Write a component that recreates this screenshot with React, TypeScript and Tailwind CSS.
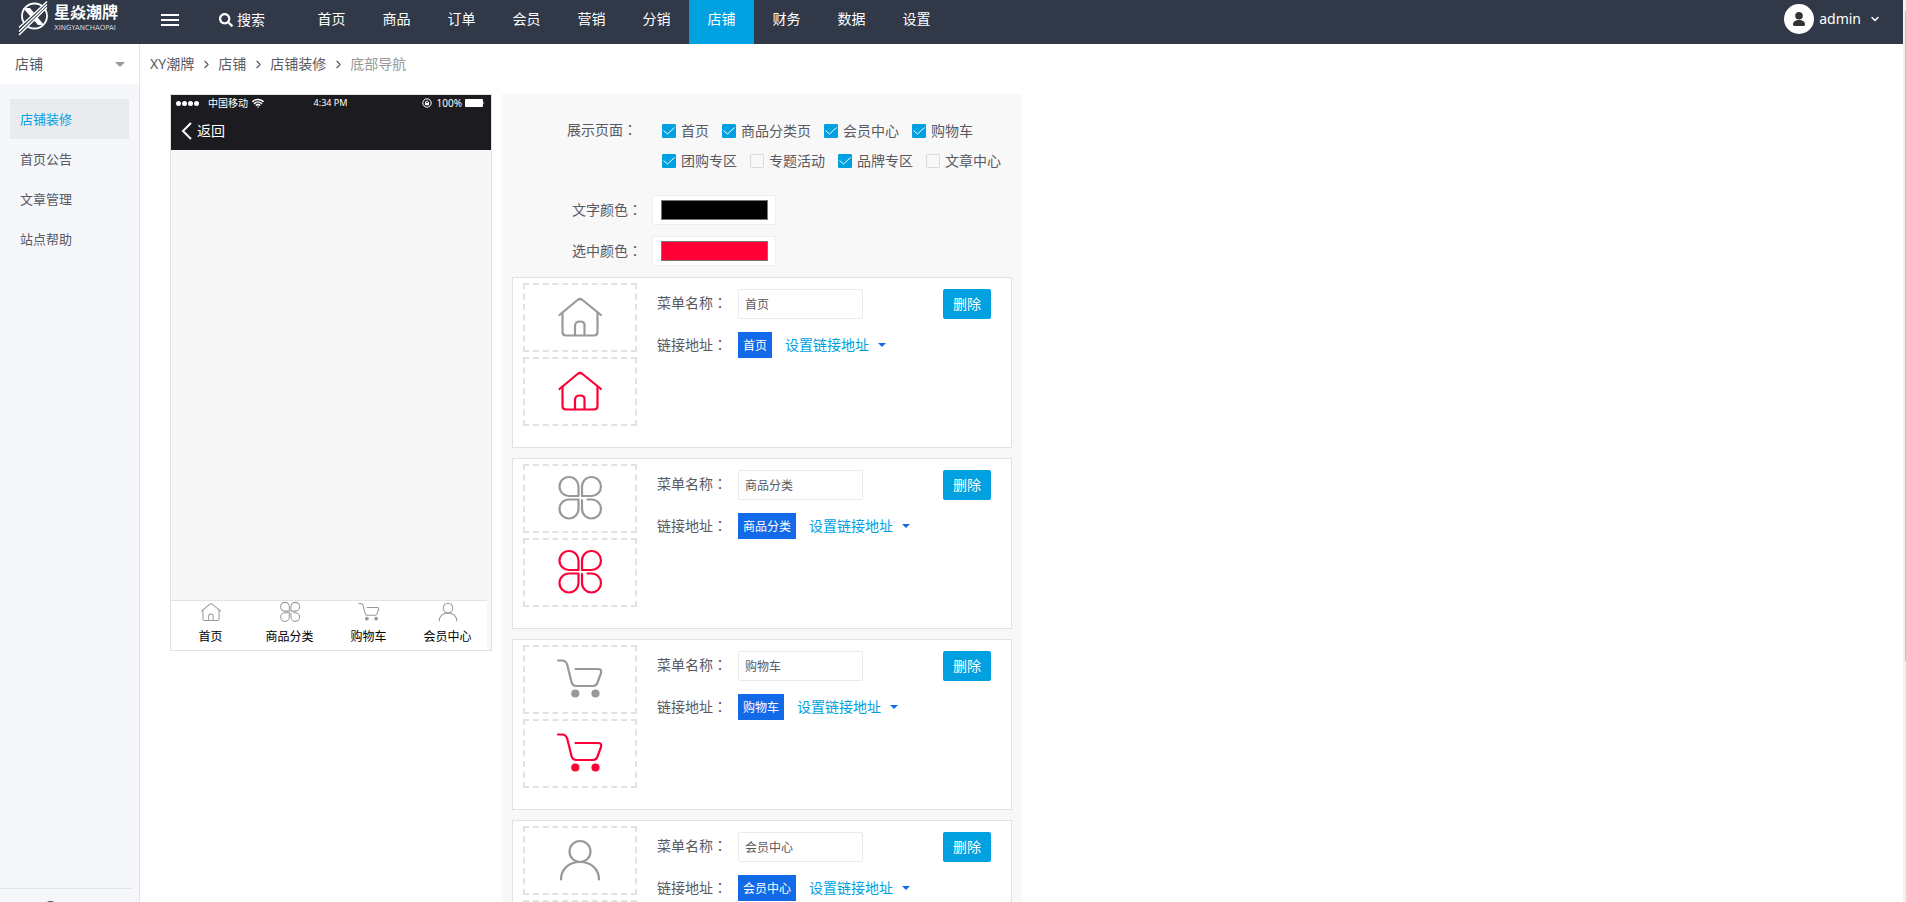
import { useState } from 'react';
import { FaSearch } from 'react-icons/fa';
import { ChevronDown, ChevronRight, Wifi } from 'lucide-react';

type IconName = 'home' | 'category' | 'cart' | 'user';

const navItems = ['首页', '商品', '订单', '会员', '营销', '分销', '店铺', '财务', '数据', '设置'];
const sideItems = ['店铺装修', '首页公告', '文章管理', '站点帮助'];
const crumbs = ['XY潮牌', '店铺', '店铺装修', '底部导航'];

const pageRows = [
  [
    { label: '首页', checked: true },
    { label: '商品分类页', checked: true },
    { label: '会员中心', checked: true },
    { label: '购物车', checked: true }
  ],
  [
    { label: '团购专区', checked: true },
    { label: '专题活动', checked: false },
    { label: '品牌专区', checked: true },
    { label: '文章中心', checked: false }
  ]
];

const menus: { name: string; icon: IconName }[] = [
  { name: '首页', icon: 'home' },
  { name: '商品分类', icon: 'category' },
  { name: '购物车', icon: 'cart' },
  { name: '会员中心', icon: 'user' }
];

function MenuIcon({ name, className }: { name: IconName; className: string }) {
  return (
    <svg viewBox="0 0 50 50" className={className} fill="none" stroke="currentColor" strokeWidth="2.2" strokeLinecap="round" strokeLinejoin="round">
      {name === 'home' && (
        <>
          <path d="M4.500 22L22.500 7Q25 5 27.500 7L46 22" />
          <path d="M7.500 19.500V39Q7.500 42.500 11 42.500H39Q42.500 42.500 42.500 39V19.500" />
          <path d="M20 42V33Q20 28.500 25 28.500T29.500 33V42" />
        </>
      )}
      {name === 'category' && (
        <g transform="translate(0 -1.5)">
          <path d="M23.500 23.500H14A9.500 9.500 0 1 1 23.500 14Z" />
          <path d="M27 23.500V14A9.500 9.500 0 1 1 36.500 23.500Z" />
          <path d="M23.500 27V36.500A9.500 9.500 0 1 1 14 27Z" />
          <path d="M27 27.500V36.500A9.500 9.500 0 1 0 36.500 27H32.500" />
        </g>
      )}
      {name === 'cart' && (
        <>
          <path d="M3 5.500H7Q11 5.500 12.300 10L16.500 27Q17.500 31 21.500 31H38Q41.500 31 42.500 27.500L46 18Q47 14 43 14H20.500" />
          <circle cx="20.300" cy="38.500" r="3" fill="currentColor" />
          <circle cx="40.500" cy="38.500" r="3" fill="currentColor" />
        </>
      )}
      {name === 'user' && (
        <>
          <circle cx="25" cy="15.500" r="10.500" />
          <path d="M6 43.500C6 33 14 26 25 26S44 33 44 43.500" />
        </>
      )}
    </svg>
  );
}

// full-width colon, centred in its box
function Colon() {
  return <span className="font-['Noto_Sans_CJK_TC',sans-serif]">：</span>;
}

function Logo() {
  return (
    <a href="#" className="flex w-[140px] shrink-0 items-start gap-[2px] pl-[18px] text-white">
      <svg viewBox="0 0 34 36" className="h-9 w-[34px]" fill="none" stroke="currentColor">
        <circle cx="16.500" cy="16" r="12.500" strokeWidth="1.800" />
        <path d="M5 8H12L26 25H20Z" fill="currentColor" stroke="none" />
        <path d="M29 1L0 28V37L29 7Z" fill="#313847" stroke="none" />
        <path d="M29 1.500L1 27.500M29 4.500L1 31.500M29 7.500L1 35" strokeWidth="1.500" />
      </svg>
      <span className="flex flex-col">
        <span className="text-base leading-6 font-bold">星焱潮牌</span>
        <span className="font-['DejaVu_Sans',sans-serif] text-[7px] leading-[8px] text-gray-300">XINGYANCHAOPAI</span>
      </span>
    </a>
  );
}

function Header() {
  return (
    <header className="flex h-11 bg-[#313847] text-sm text-white">
      <Logo />
      <button aria-label="菜单" className="ml-[21px] flex h-10 w-[18px] flex-col justify-center gap-[3px]">
        <span className="h-[2px] w-full bg-white" />
        <span className="h-[2px] w-full bg-white" />
        <span className="h-[2px] w-full bg-white" />
      </button>
      <button className="ml-10 flex h-10 w-20 items-center gap-1">
        <FaSearch size={14} />
        搜索
      </button>
      <nav className="flex">
        {navItems.map(item => (
          <a key={item} href="#" className={`flex w-[65px] justify-center leading-[38px] ${item === '店铺' ? 'bg-[#00a0e1]' : ''}`}>
            {item}
          </a>
        ))}
      </nav>
      <button className="mr-[22px] ml-auto flex h-[38px] items-center">
        <span className="flex size-[30px] items-center justify-center rounded-full bg-white">
          <svg viewBox="0 0 12 14" className="h-[14px] w-3 fill-[#333]">
            <circle cx="6" cy="3.800" r="3.800" />
            <path d="M0 12.500C0 9.500 2.500 8 6 8S12 9.500 12 12.500Q12 14 10.500 14H1.500Q0 14 0 12.500Z" />
          </svg>
        </span>
        <span className="mr-2 ml-[5px]">admin</span>
        <ChevronDown size={12} strokeWidth={3} />
      </button>
    </header>
  );
}

function Sidebar() {
  return (
    <aside className="flex w-[140px] shrink-0 flex-col border-r border-[#e4e5ec] bg-[#f5f7fb] text-[#595961]">
      <button className="flex h-10 items-center justify-between bg-white pr-[14px] pl-[15px] text-sm">
        店铺
        <span className="border-x-5 border-t-5 border-x-transparent border-t-[#999]" />
      </button>
      <nav className="flex flex-1 flex-col px-[10px] pt-[15px] text-[13px]">
        {sideItems.map((item, idx) => (
          <a key={item} href="#" className={`pl-[10px] leading-10 ${idx === 0 ? 'bg-[#eaebef] text-[#00a0e1]' : ''}`}>
            {item}
          </a>
        ))}
      </nav>
      <div className="mr-[6px] h-[14px] overflow-hidden border-t border-[#e4e5ec] pt-3 pl-[46px]">
        <div className="h-1 w-[9px] rounded-t-full bg-[#555]" />
      </div>
    </aside>
  );
}

function PhonePreview() {
  return (
    <section className="w-[322px] shrink-0 border border-[#e2e2e2] bg-[#f7f7f7]">
      <div className="h-[55px] bg-[#1c1b20] text-white">
        <div className="flex h-4 items-center pr-[6px] pl-[5px] text-[10px]">
          <span className="flex flex-1 items-center">
            <span className="flex gap-px">
              {[0, 1, 2, 3].map(dot => (
                <span key={dot} className="size-[5px] rounded-full bg-white" />
              ))}
            </span>
            <span className="mr-1 ml-[9px]">中国移动</span>
            <Wifi size={12} strokeWidth={3} />
          </span>
          <span className="text-[9px]">4:34 PM</span>
          <span className="flex flex-1 items-center justify-end">
            <svg viewBox="0 0 10 10" className="mr-[5px] size-[10px]" fill="none" stroke="currentColor">
              <circle cx="5" cy="5" r="4.200" />
              <path d="M3.500 5V4Q5 1.800 6.500 4V5" />
              <path d="M3 4.800H7V7.200H3Z" fill="currentColor" stroke="none" />
            </svg>
            <span className="mr-[3px]">100%</span>
            <svg viewBox="0 0 20 8" className="h-2 w-5" fill="currentColor">
              <rect width="18" height="8" rx="1" />
              <path d="M18.500 2.500Q20 4 18.500 5.500Z" />
            </svg>
          </span>
        </div>
        <button className="flex h-10 items-center gap-[5px] pl-[10px] text-sm">
          <svg viewBox="0 0 11 18" className="h-[18px] w-[11px]" fill="none" stroke="currentColor" strokeWidth="2">
            <path d="M10 1L2 9L10 17" />
          </svg>
          返回
        </button>
      </div>
      <div className="h-[450px]" />
      <nav className="mr-1 flex border-t border-[#e2e2e2] bg-white">
        {menus.map(menu => (
          <a key={menu.name} href="#" className="flex h-[49px] flex-1 flex-col items-center text-xs text-black">
            <MenuIcon name={menu.icon} className="size-[26px] text-[#999]" />
            <span className="leading-[26px]">{menu.name}</span>
          </a>
        ))}
      </nav>
    </section>
  );
}

function PageCheckbox({ label, defaultChecked }: { label: string; defaultChecked: boolean }) {
  const [checked, setChecked] = useState(defaultChecked);
  return (
    <label className="flex items-center gap-[5px] leading-[30px]">
      <span className="grid">
        <input
          type="checkbox"
          checked={checked}
          onChange={e => setChecked(e.target.checked)}
          className="col-start-1 row-start-1 size-[14px] appearance-none rounded-[1px] border border-[#dcdcdc] checked:border-[#00a0e1] checked:bg-[#00a0e1]"
        />
        {checked && (
          <svg viewBox="0 0 14 14" className="pointer-events-none col-start-1 row-start-1 size-[14px]" fill="none" stroke="white">
            <path d="M1.500 6.500L5.500 10L12.500 3.500" />
          </svg>
        )}
      </span>
      {label}
    </label>
  );
}

function ColorField({ id, label, value }: { id: string; label: string; value: string }) {
  const [color, setColor] = useState(value);
  return (
    <div className="flex h-[30px]">
      <label htmlFor={id} className="w-[140px] pl-[60px] leading-7">{label}<Colon /></label>
      <span className="flex h-[30px] w-[124px] items-center justify-center rounded-[2px] border border-[#eee] bg-white">
        <input
          id={id}
          type="color"
          value={color}
          onChange={e => setColor(e.target.value)}
          className="h-5 w-[107px] appearance-none border border-[#777] [&::-webkit-color-swatch]:border-0 [&::-webkit-color-swatch-wrapper]:p-0"
        />
      </span>
    </div>
  );
}

function MenuCard({ name, icon }: { name: string; icon: IconName }) {
  return (
    <div className="flex h-[171px] border border-[#e2e2e2] bg-white pt-[5px] pr-5 pl-[10px]">
      <div className="mr-5 flex flex-col gap-[5px]">
        <div className="flex h-[69px] w-[114px] items-center justify-center border-2 border-dashed border-[#e2e2e2]">
          <MenuIcon name={icon} className="size-[50px] text-[#999]" />
        </div>
        <div className="flex h-[69px] w-[114px] items-center justify-center border-2 border-dashed border-[#e2e2e2]">
          <MenuIcon name={icon} className="size-[50px] text-[#ff0036]" />
        </div>
      </div>
      <div className="flex flex-1 flex-col gap-[13px] pt-[6px]">
        <div className="flex">
          <label htmlFor={`menu-${icon}`} className="w-[81px] leading-[26px]">菜单名称<Colon /></label>
          <input id={`menu-${icon}`} defaultValue={name} className="h-[30px] w-[125px] rounded-[2px] border border-[#e9e9f0] px-[6px] text-xs" />
          <button className="ml-auto h-[30px] w-12 rounded-[2px] bg-[#00a0e1] text-white">删除</button>
        </div>
        <div className="flex h-[26px] leading-6">
          <span className="w-[81px]">链接地址<Colon /></span>
          <span className="bg-[#136ae8] px-[5px] text-xs leading-7 text-white">{name}</span>
          <button className="ml-[13px] flex items-center gap-[9px] text-[#00a0e1]">
            设置链接地址
            <span className="border-x-4 border-t-4 border-x-transparent border-t-[#136ae8]" />
          </button>
        </div>
      </div>
    </div>
  );
}

export default function App() {
  return (
    <div className="flex h-screen overflow-hidden bg-white font-['Noto_Sans','Noto_Sans_CJK_SC',sans-serif] text-sm text-[#595961]">
      <div className="flex min-w-0 flex-1 flex-col">
        <Header />
        <div className="flex min-h-0 flex-1">
          <Sidebar />
          <main className="flex min-w-0 flex-1 flex-col overflow-hidden">
            <nav className="flex h-10 shrink-0 items-center gap-[6px] pl-[10px]">
              {crumbs.map((crumb, idx) => (
                <span key={crumb} className="flex items-center gap-[5px]">
                  {idx > 0 && <ChevronRight size={13} />}
                  <a href="#" className={idx === crumbs.length - 1 ? 'text-[#999]' : ''}>{crumb}</a>
                </span>
              ))}
            </nav>
            <div className="flex items-start gap-[10px] pt-[10px] pl-[30px]">
              <PhonePreview />
              <section className="w-[520px] shrink-0 bg-[#f8f8f8] px-[10px] pt-[22px]">
                <div className="flex">
                  <span className="w-[150px] pl-[55px] leading-[26px]">展示页面<Colon /></span>
                  <div>
                    {pageRows.map((row, idx) => (
                      <div key={idx} className="flex gap-[13px]">
                        {row.map(page => (
                          <PageCheckbox key={page.label} label={page.label} defaultChecked={page.checked} />
                        ))}
                      </div>
                    ))}
                  </div>
                </div>
                <div className="mt-[19px] mb-[11px] flex flex-col gap-[11px]">
                  <ColorField id="text-color" label="文字颜色" value="#000000" />
                  <ColorField id="active-color" label="选中颜色" value="#ff0036" />
                </div>
                <div className="flex flex-col gap-[10px]">
                  {menus.map(menu => (
                    <MenuCard key={menu.name} name={menu.name} icon={menu.icon} />
                  ))}
                </div>
              </section>
            </div>
          </main>
        </div>
      </div>
      <div className="w-[3px] bg-[#f1f1f1] pt-[11px] pl-[2px]">
        <div className="h-[73%] bg-[#c1c1c1]" />
      </div>
    </div>
  );
}
